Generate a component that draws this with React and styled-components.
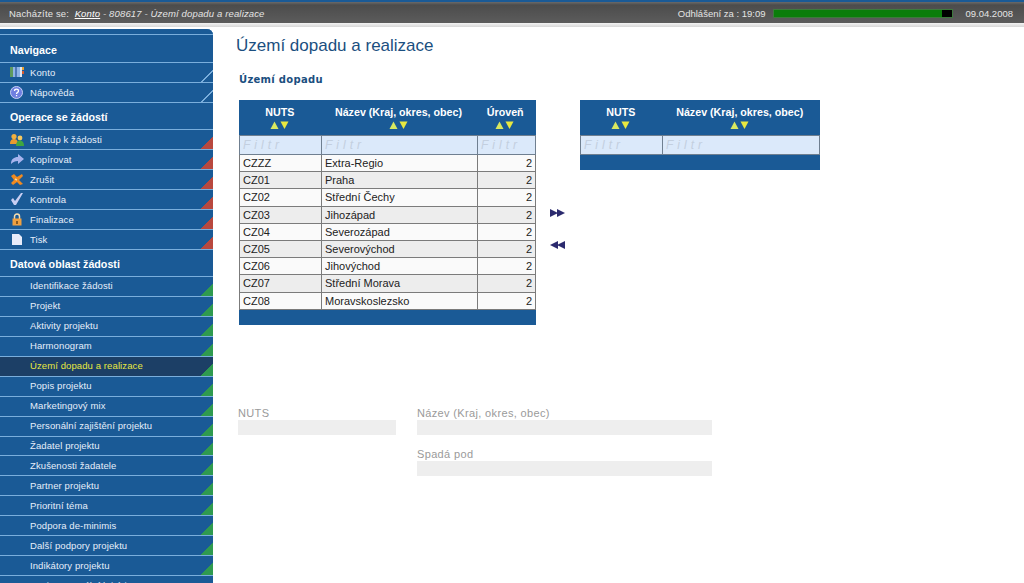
import React from 'react';
import styled, { createGlobalStyle } from 'styled-components';

const GlobalStyle = createGlobalStyle`
	html, body {
		margin: 0;
		padding: 0;
		height: 583px;
		overflow: hidden;
		background: #fff;
		font-family: 'Liberation Sans', Arial, sans-serif;
	}
	* {
		box-sizing: border-box;
	}
`;

const navItems = [
	{ label: 'Konto', icon: 'book' },
	{ label: 'Nápověda', icon: 'help' },
];

const requestItems = [
	{ label: 'Přístup k žádosti', icon: 'users' },
	{ label: 'Kopírovat', icon: 'copy' },
	{ label: 'Zrušit', icon: 'cancel' },
	{ label: 'Kontrola', icon: 'check' },
	{ label: 'Finalizace', icon: 'lock' },
	{ label: 'Tisk', icon: 'print' },
];

const dataItems = [
	'Identifikace žádosti',
	'Projekt',
	'Aktivity projektu',
	'Harmonogram',
	'Území dopadu a realizace',
	'Popis projektu',
	'Marketingový mix',
	'Personální zajištění projektu',
	'Žadatel projektu',
	'Zkušenosti žadatele',
	'Partner projektu',
	'Prioritní téma',
	'Podpora de-minimis',
	'Další podpory projektu',
	'Indikátory projektu',
	'Environmentální kritéria',
];

const regions = [
	['CZZZ', 'Extra-Regio'],
	['CZ01', 'Praha'],
	['CZ02', 'Střední Čechy'],
	['CZ03', 'Jihozápad'],
	['CZ04', 'Severozápad'],
	['CZ05', 'Severovýchod'],
	['CZ06', 'Jihovýchod'],
	['CZ07', 'Střední Morava'],
	['CZ08', 'Moravskoslezsko'],
];

const MenuIcon = ({ name }) => {
	switch (name) {
		case 'book':
			return (
				<svg width='14' height='12' viewBox='0 0 14 12'>
					<rect x='0' y='1' width='4' height='10' fill='#5f9a5f' />
					<rect x='3' y='1' width='7' height='10' fill='#8fb4e6' />
					<rect x='5' y='1' width='2' height='10' fill='#4f78b8' />
					<rect x='10' y='1' width='2' height='10' fill='#dfe9f5' />
					<rect x='12' y='1' width='2' height='3' fill='#e8a030' />
					<rect x='12' y='5' width='2' height='3' fill='#d85a30' />
				</svg>
			);
		case 'help':
			return (
				<svg width='13' height='13' viewBox='0 0 13 13'>
					<circle cx='6.5' cy='6.5' r='6' fill='#6f7fe0' stroke='#c9d2f5' />
					<path d='M4.5 5c0-2.4 4-2.4 4 0 0 1.4-2 1.4-2 3' fill='none' stroke='#fff' strokeWidth='1.3' />
					<rect x='5.9' y='9' width='1.3' height='1.3' fill='#fff' />
				</svg>
			);
		case 'users':
			return (
				<svg width='14' height='13' viewBox='0 0 14 13'>
					<circle cx='4' cy='3.5' r='2.6' fill='#f0b040' />
					<path d='M0 11c0-4 2-5 4-5s4 1 4 5z' fill='#e89a30' />
					<circle cx='10' cy='5' r='2.4' fill='#f4c860' />
					<path d='M6 13c0-4 2-5.5 4-5.5s4 1.5 4 5.5z' fill='#3fa63f' />
				</svg>
			);
		case 'copy':
			return (
				<svg width='14' height='12' viewBox='0 0 14 12'>
					<path d='M1 11c0-5 3-7 7-7V1l6 5-6 5V8C5 8 3 9 1 11z' fill='#a8b4ee' />
				</svg>
			);
		case 'cancel':
			return (
				<svg width='14' height='13' viewBox='0 0 14 13'>
					<path d='M1 3l3-2 3 3 5-3 1 2-4 4 4 4-3 1-3-3-4 3-2-2 3-3z' fill='#f08a20' />
					<path d='M5 6l2 1' stroke='#f6d8a0' strokeWidth='1.5' />
				</svg>
			);
		case 'check':
			return (
				<svg width='14' height='14' viewBox='0 0 14 14'>
					<path d='M1 8l2-2 2 3 6-8 2 0-7 12H4z' fill='#c8cef2' />
				</svg>
			);
		case 'lock':
			return (
				<svg width='10' height='13' viewBox='0 0 10 13'>
					<path d='M2.5 6V3.5a2.5 2.5 0 0 1 5 0V6' fill='none' stroke='#f4dcae' strokeWidth='1.5' />
					<rect x='0.5' y='5.5' width='9' height='7' fill='#f0a040' />
					<rect x='4' y='8' width='2' height='3' fill='#8a5a20' />
				</svg>
			);
		default:
			return (
				<svg width='10' height='12' viewBox='0 0 10 12'>
					<path d='M0 1h7l3 3v8H0z' fill='#e8ecfa' />
				</svg>
			);
	}
};

const SortArrows = () => (
	<Arrows>
		<svg width='20' height='8' viewBox='0 0 20 8'>
			<path d='M0.5 8L4.5 0.5 8.5 8z' fill='#d8e860' />
			<path d='M10.5 0.5h8l-4 7.5z' fill='#e8e840' />
		</svg>
	</Arrows>
);

const MoveArrows = ({ back }) => (
	<MoveIcon width='16' height='8' viewBox='0 0 16 8'>
		{back ? (
			<path d='M0 4l8-4v8zM7 4l8-4v8z' fill='#2b2a6e' />
		) : (
			<path d='M0 0l8 4-8 4zM7 0l8 4-8 4z' fill='#2b2a6e' />
		)}
	</MoveIcon>
);

const App = () => {
	return (
		<Page>
			<GlobalStyle />
			<TopBar>
				<Crumbs>
					Nacházíte se:&nbsp;{' '}
					<CrumbTrail>
						<CrumbLink>Konto</CrumbLink> - 808617 - Území dopadu a realizace
					</CrumbTrail>
				</Crumbs>
				<Session>Odhlášení za : 19:09</Session>
				<Progress>
					<ProgressFill />
				</Progress>
				<DateText>09.04.2008</DateText>
			</TopBar>
			<TopEdge />
			<Body>
				<Sidebar>
					<Heading first>Navigace</Heading>
					{navItems.map((item) => (
						<MenuRow key={item.label} kind='nav'>
							<IconBox>
								<MenuIcon name={item.icon} />
							</IconBox>
							{item.label}
						</MenuRow>
					))}
					<Heading>Operace se žádostí</Heading>
					{requestItems.map((item) => (
						<MenuRow key={item.label} kind='request'>
							<IconBox>
								<MenuIcon name={item.icon} />
							</IconBox>
							{item.label}
						</MenuRow>
					))}
					<Heading>Datová oblast žádosti</Heading>
					{dataItems.map((label) => (
						<MenuRow key={label} kind='data' active={label === 'Území dopadu a realizace'}>
							<IconBox />
							{label}
						</MenuRow>
					))}
				</Sidebar>
				<Main>
					<Title>Území dopadu a realizace</Title>
					<SubTitle>Území dopadu</SubTitle>
					<Tables>
						<LeftGrid>
							<colgroup>
								<col width='82' />
								<col width='156' />
								<col width='58' />
							</colgroup>
							<thead>
								<tr>
									<HeadCell>
										NUTS
										<SortArrows />
									</HeadCell>
									<HeadCell>
										Název (Kraj, okres, obec)
										<SortArrows />
									</HeadCell>
									<HeadCell>
										Úroveň
										<SortArrows />
									</HeadCell>
								</tr>
								<tr>
									<FilterCell>Filtr</FilterCell>
									<FilterCell>Filtr</FilterCell>
									<FilterCell>Filtr</FilterCell>
								</tr>
							</thead>
							<tbody>
								{regions.map(([code, name], i) => (
									<DataRow key={code} odd={i % 2 === 1}>
										<DataCell>{code}</DataCell>
										<DataCell>{name}</DataCell>
										<LevelCell>2</LevelCell>
									</DataRow>
								))}
							</tbody>
							<tfoot>
								<tr>
									<FootCell colSpan='3' />
								</tr>
							</tfoot>
						</LeftGrid>
						<MoveColumn>
							<MoveArrows />
							<MoveArrows back />
						</MoveColumn>
						<RightGrid>
							<colgroup>
								<col width='82' />
								<col width='157' />
							</colgroup>
							<thead>
								<tr>
									<HeadCell>
										NUTS
										<SortArrows />
									</HeadCell>
									<HeadCell>
										Název (Kraj, okres, obec)
										<SortArrows />
									</HeadCell>
								</tr>
								<tr>
									<FilterCell>Filtr</FilterCell>
									<FilterCell>Filtr</FilterCell>
								</tr>
							</thead>
							<tfoot>
								<tr>
									<FootCell colSpan='2' />
								</tr>
							</tfoot>
						</RightGrid>
					</Tables>
					<Form>
						<Field width={158}>
							<Label>NUTS</Label>
							<Value />
						</Field>
						<FieldColumn>
							<Field width={295}>
								<Label>Název (Kraj, okres, obec)</Label>
								<Value />
							</Field>
							<Field width={295}>
								<Label>Spadá pod</Label>
								<Value />
							</Field>
						</FieldColumn>
					</Form>
				</Main>
			</Body>
		</Page>
	);
};

const Page = styled.div`
	width: 1024px;
	height: 583px;
	overflow: hidden;
	display: flex;
	flex-direction: column;
	background: #fff;
`;

const TopBar = styled.header`
	height: 23px;
	display: flex;
	align-items: center;
	padding: 1px 11px 0 9px;
	border-top: 2px solid #1a5a96;
	background: linear-gradient(#6a6a6a 0, #4c4c4c 3px, #5c5c5c 100%);
	color: #e4e4e4;
	font-size: 9.5px;
`;

const Crumbs = styled.div`
	flex: 1;
	letter-spacing: 0.15px;
`;

const CrumbTrail = styled.span`
	font-style: italic;
`;

const CrumbLink = styled.span`
	color: #fff;
	text-decoration: underline;
`;

const Session = styled.div`
	font-size: 9.5px;
`;

const Progress = styled.div`
	width: 180px;
	height: 9px;
	margin: 0 12px 0 8px;
	border: 1px solid #3d7a3d;
	background: #000;
`;

const ProgressFill = styled.div`
	width: 94%;
	height: 100%;
	background: #0b7d0b;
`;

const DateText = styled.div`
	font-size: 9.5px;
`;

const TopEdge = styled.div`
	height: 4px;
	background: linear-gradient(#f2f2f2, #d8d8d8);
`;

const Body = styled.div`
	flex: 1;
	display: flex;
	min-height: 0;
`;

const Sidebar = styled.nav`
	flex: 0 0 213px;
	background: #1a5a96;
	border-top-right-radius: 6px;
	overflow: hidden;
	margin-top: 2px;
`;

const Heading = styled.h3`
	margin: 0;
	height: ${({ first }) => (first ? '34px' : '27px')};
	padding: ${({ first }) => (first ? '8px 0 0 10px' : '1px 0 0 10px')};
	display: flex;
	align-items: center;
	color: #fff;
	font-size: 10.7px;
	font-weight: bold;
	border-bottom: 1px solid #7aaedc;
	box-shadow: ${({ first }) => (first ? 'inset 0 5px 0 #1a5a96, inset 0 6px 0 #7aaedc' : 'none')};
`;

const triangleColors = {
	nav: 'linear-gradient(to bottom right, transparent 48%, #7aaedc 48%, #7aaedc 56%, #1a5a96 56%)',
	request: 'linear-gradient(to bottom right, transparent 48%, #b8483e 48%)',
	data: 'linear-gradient(to bottom right, transparent 48%, #2f9a4f 48%)',
};

const MenuRow = styled.a`
	position: relative;
	height: ${({ kind }) => (kind === 'data' ? '19.95px' : '20px')};
	display: flex;
	align-items: center;
	padding-bottom: 1px;
	color: ${({ active }) => (active ? '#e8e840' : '#e6eefa')};
	background: ${({ active }) => (active ? '#1c3f66' : 'transparent')};
	font-size: 9.5px;
	letter-spacing: 0.1px;
	border-bottom: 1px solid #7aaedc;

	&::after {
		content: '';
		position: absolute;
		right: 0;
		bottom: 0;
		width: 12px;
		height: 12px;
		background: ${({ kind }) => triangleColors[kind]};
	}
`;

const IconBox = styled.span`
	flex: 0 0 30px;
	display: flex;
	justify-content: center;
	padding-left: 3px;
`;

const Main = styled.main`
	flex: 1;
	padding: 9px 0 0 23px;
	min-width: 0;
`;

const Title = styled.h1`
	margin: 0;
	color: #1b4f80;
	font-size: 17px;
	font-weight: normal;
	line-height: 20px;
`;

const SubTitle = styled.h2`
	margin: 17px 0 0 3px;
	color: #1b4f80;
	font-family: 'DejaVu Sans', Verdana, sans-serif;
	font-size: 10px;
	font-weight: bold;
	line-height: 13px;
	letter-spacing: 0.3px;
`;

const Tables = styled.div`
	display: flex;
	align-items: flex-start;
	margin: 14px 0 0 3px;
`;

const Grid = styled.table`
	border-collapse: collapse;
	table-layout: fixed;
	border: 1px solid #1a5a96;
`;

const LeftGrid = styled(Grid)`
	width: 296px;
`;

const RightGrid = styled(Grid)`
	width: 239px;
`;

const HeadCell = styled.th`
	height: 35px;
	padding: 5px 2px 0 0;
	background: #1a5a96;
	color: #fff;
	font-size: 10.7px;
	font-weight: bold;
	line-height: 12px;
	text-align: center;
	vertical-align: top;
`;

const Arrows = styled.div`
	height: 8px;
	margin-top: 3px;
	line-height: 8px;

	svg {
		display: block;
		margin: 0 auto;
	}
`;

const FilterCell = styled.td`
	height: 19px;
	padding: 0 3px;
	background: #dbe9fa;
	border: 1px solid #6f7f90;
	color: #c3cfdf;
	font-size: 12px;
	font-style: italic;
	letter-spacing: 4px;
	overflow: hidden;
	white-space: nowrap;
`;

const DataRow = styled.tr`
	background: ${({ odd }) => (odd ? '#ededed' : '#fafafa')};
`;

const DataCell = styled.td`
	height: 17.2px;
	padding: 0 3px;
	border: 1px solid #7b7b7b;
	color: #222;
	font-size: 11px;
	line-height: 14px;
`;

const LevelCell = styled(DataCell)`
	text-align: right;
`;

const FootCell = styled.td`
	height: 15px;
	padding: 0;
	background: #1a5a96;
`;

const MoveColumn = styled.div`
	flex: 0 0 44px;
	display: flex;
	flex-direction: column;
	align-items: center;
	gap: 24px;
	padding-top: 109px;
`;

const MoveIcon = styled.svg`
	display: block;
`;

const Form = styled.div`
	display: flex;
	gap: 21px;
	margin: 82px 0 0 2px;
`;

const FieldColumn = styled.div`
	display: flex;
	flex-direction: column;
	gap: 13px;
`;

const Field = styled.div`
	width: ${({ width }) => width}px;
`;

const Label = styled.div`
	color: #9a9a9a;
	font-size: 11px;
	line-height: 13px;
	letter-spacing: 0.35px;
`;

const Value = styled.div`
	height: 15px;
	background: #eeeeee;
`;

export default App;
